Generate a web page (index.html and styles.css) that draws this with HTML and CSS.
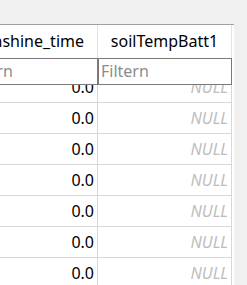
FILE: index.html
```
<!DOCTYPE html>
<html>
<head>
<meta charset="utf-8">
<link rel="stylesheet" href="styles.css">
</head>
<body>
<div class="view">
  <div class="grid">
    <div class="table">
      <div class="row head">
        <div class="cell c1">sunshine_time</div>
        <div class="cell c2">soilTempBatt1</div>
      </div>
      <div class="row filters">
        <div class="fcell c1"><span class="ph">Filtern</span></div>
        <div class="fcell c2"><span class="ph">Filtern</span></div>
      </div>
      <div class="body">
        <div class="rows">
          <div class="row data"><div class="cell c1 num">0.0</div><div class="cell c2 null">NULL</div></div>
          <div class="row data"><div class="cell c1 num">0.0</div><div class="cell c2 null">NULL</div></div>
          <div class="row data"><div class="cell c1 num">0.0</div><div class="cell c2 null">NULL</div></div>
          <div class="row data"><div class="cell c1 num">0.0</div><div class="cell c2 null">NULL</div></div>
          <div class="row data"><div class="cell c1 num">0.0</div><div class="cell c2 null">NULL</div></div>
          <div class="row data"><div class="cell c1 num">0.0</div><div class="cell c2 null">NULL</div></div>
          <div class="row data"><div class="cell c1 num">0.0</div><div class="cell c2 null">NULL</div></div>
        </div>
      </div>
    </div>
  </div>
</div>
</body>
</html>
```

FILE: styles.css
```
html, body {
  margin: 0;
  padding: 0;
  width: 247px;
  height: 285px;
  overflow: hidden;
  background: #f0f0f0;
}
body {
  font-family: "Noto Sans", "Open Sans", sans-serif;
  font-size: 16px;
  color: #000;
}
.view {
  display: flex;
  padding-top: 24px;
  height: 261px;
}
.grid {
  width: 234px;
  height: 260px;
  background: #fff;
  border-top: 1px solid #a0a0a0;
  overflow: hidden;
}
.table {
  margin-left: -38px;
  width: 272px;
  display: flex;
  flex-direction: column;
}
.row {
  display: flex;
}
.c1 { width: 136px; }
.c2 { width: 134px; }
.cell {
  box-sizing: border-box;
  border-right: 1px solid #d8d8d8;
  white-space: nowrap;
  overflow: hidden;
}
.head .cell {
  height: 33px;
  line-height: 33px;
  text-align: center;
  border-right-color: #e3e3e3;
}
.filters .fcell {
  box-sizing: border-box;
  height: 27px;
  border: 1px solid #7a7a7a;
  padding-left: 2px;
  line-height: 25px;
}
.ph { color: #8c8c8c; }
.body {
  height: 200px;
  overflow: hidden;
}
.rows {
  margin-top: -13px;
}
.data .cell {
  height: 31px;
  line-height: 31px;
  border-bottom: 1px solid #d8d8d8;
  padding-right: 3px;
  text-align: right;
}
.num {
  padding-right: 4px;
}
.null {
  color: #bdbdbd;
  font-style: italic;
}
```
